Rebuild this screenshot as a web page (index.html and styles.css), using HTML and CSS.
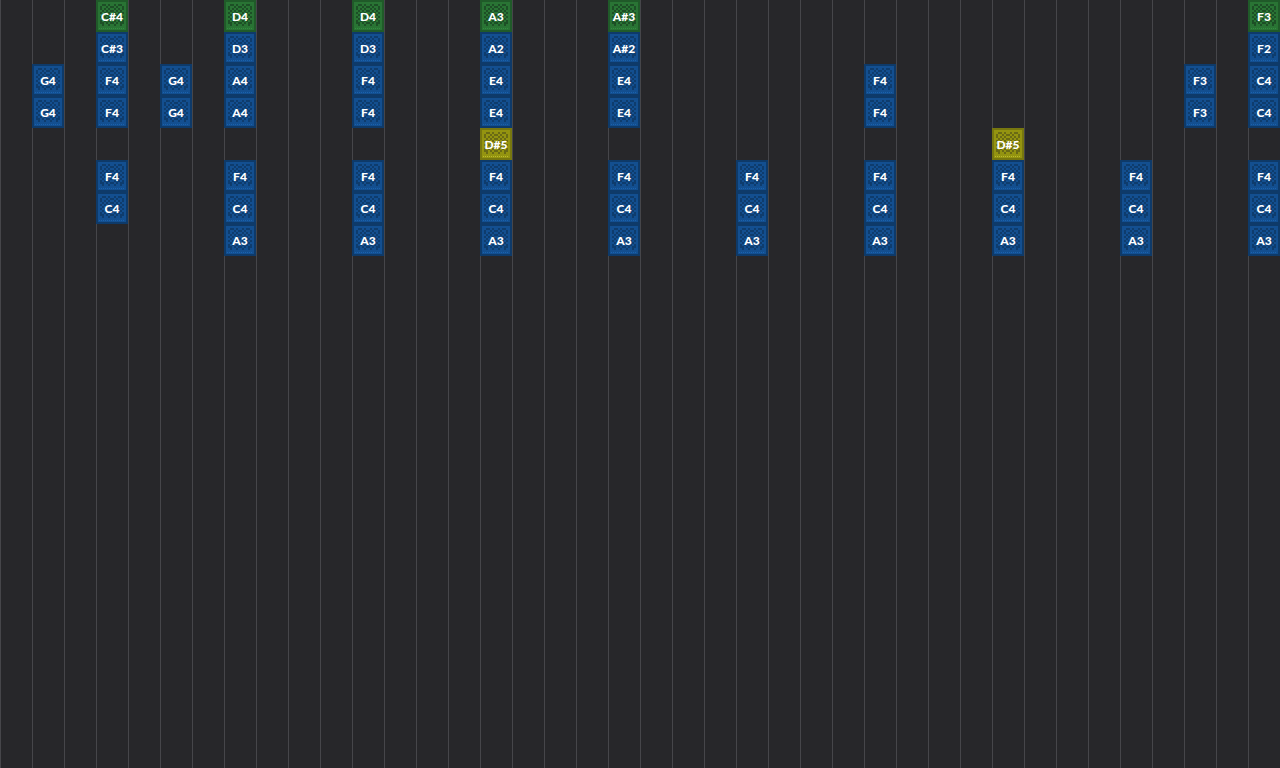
FILE: index.html
```
<!DOCTYPE html>
<html lang="en">
<head>
    <meta charset="UTF-8">
    <meta name="viewport" content="width=device-width, initial-scale=1.0">
    <title>Note Block Editor</title>
    <link rel="stylesheet" href="styles.css">
</head>
<body>
    <!-- Shared block texture, 16x16 texels -->
    <svg class="defs" aria-hidden="true">
        <symbol id="block" viewBox="0 0 32 32" shape-rendering="crispEdges">
            <path id="texels" class="texels" d=""/>
            <path class="dots" d="M3 28.5h26"/>
        </symbol>
    </svg>

    <main class="editor" id="editor"></main>

    <script src="script.js"></script>
</body>
</html>
```
FILE: styles.css
```
* {
    margin: 0;
    padding: 0;
    box-sizing: border-box;
}

body {
    background: #27272a;
    color: #fff;
    font-family: Lato, sans-serif;
    overflow: hidden;
}

.defs {
    position: absolute;
    width: 0;
    height: 0;
}

/* one vertical line per tick */
.editor {
    display: grid;
    grid-auto-flow: column;
    grid-auto-columns: 32px;
    min-height: 100vh;
    overflow: hidden;
    background: repeating-linear-gradient(90deg, #46464a 0 1px, transparent 1px 32px);
}

.tick {
    display: grid;
    grid-auto-rows: 32px;
    align-content: start;
}

.note {
    display: grid;
    place-items: center;
    border: 2px solid var(--edge);
    background: var(--face);
    color: var(--dark);
}

.note svg,
.note span {
    grid-area: 1 / 1;
}

.note svg {
    width: 32px;
    height: 32px;
    margin: -2px;
}

.note span {
    padding-top: 1px;
    color: #fff;
    font-size: 12px;
    font-weight: 900;
    line-height: 16px;
}

.texels {
    fill: var(--dark);
}

.dots {
    stroke: var(--light);
    stroke-dasharray: 1 1;
}

.harp {
    --edge: #0e3a69;
    --face: #134f90;
    --dark: #0e3c6d;
    --light: #1a62ad;
}

.bass {
    --edge: #205a29;
    --face: #297434;
    --dark: #1d4f26;
    --light: #348d41;
}

.bell {
    --edge: #77770f;
    --face: #949410;
    --dark: #6a6a14;
    --light: #bcbc2c;
}
```
FILE: script.js
```
// Dark texels of the block face
const texture = [
    '................',
    '................',
    '...##.#..#.##...',
    '..#..#.##.#..#..',
    '..#.#.#..#.#.#..',
    '...#.#.##.#.#...',
    '..#.#.#..#.#.#..',
    '...#.#.##.#.#...',
    '..#.#.#..#.#.#..',
    '...#.#.##.#.#...',
    '..#.#.#..#.#.#..',
    '..##.#.##.#.##..',
    '...#..#..#..#...',
    '................',
    '................',
    '................'
];

// Notes by tick, one entry per layer
const song = {
    1: ['', '', 'G4', 'G4'],
    3: ['C#4', 'C#3', 'F4', 'F4', '', 'F4', 'C4'],
    5: ['', '', 'G4', 'G4'],
    7: ['D4', 'D3', 'A4', 'A4', '', 'F4', 'C4', 'A3'],
    11: ['D4', 'D3', 'F4', 'F4', '', 'F4', 'C4', 'A3'],
    15: ['A3', 'A2', 'E4', 'E4', 'D#5', 'F4', 'C4', 'A3'],
    19: ['A#3', 'A#2', 'E4', 'E4', '', 'F4', 'C4', 'A3'],
    23: ['', '', '', '', '', 'F4', 'C4', 'A3'],
    27: ['', '', 'F4', 'F4', '', 'F4', 'C4', 'A3'],
    31: ['', '', '', '', 'D#5', 'F4', 'C4', 'A3'],
    35: ['', '', '', '', '', 'F4', 'C4', 'A3'],
    37: ['', '', 'F3', 'F3'],
    39: ['F3', 'F2', 'C4', 'C4', '', 'F4', 'C4', 'A3']
};

const instruments = { 0: 'bass', 4: 'bell' };

let path = '';
texture.forEach((row, y) => {
    [...row].forEach((texel, x) => {
        if (texel === '#') path += `M${x * 2} ${y * 2}h2v2h-2z`;
    });
});
document.getElementById('texels').setAttribute('d', path);

const editor = document.getElementById('editor');
for (let t = 0; t < 40; t++) {
    const tick = document.createElement('div');
    tick.className = 'tick';
    (song[t] || []).forEach((key, layer) => {
        const cell = document.createElement('div');
        if (key) {
            cell.className = 'note ' + (instruments[layer] || 'harp');
            cell.innerHTML = `<svg aria-hidden="true"><use href="#block"/></svg><span>${key}</span>`;
        }
        tick.appendChild(cell);
    });
    editor.appendChild(tick);
}
```
